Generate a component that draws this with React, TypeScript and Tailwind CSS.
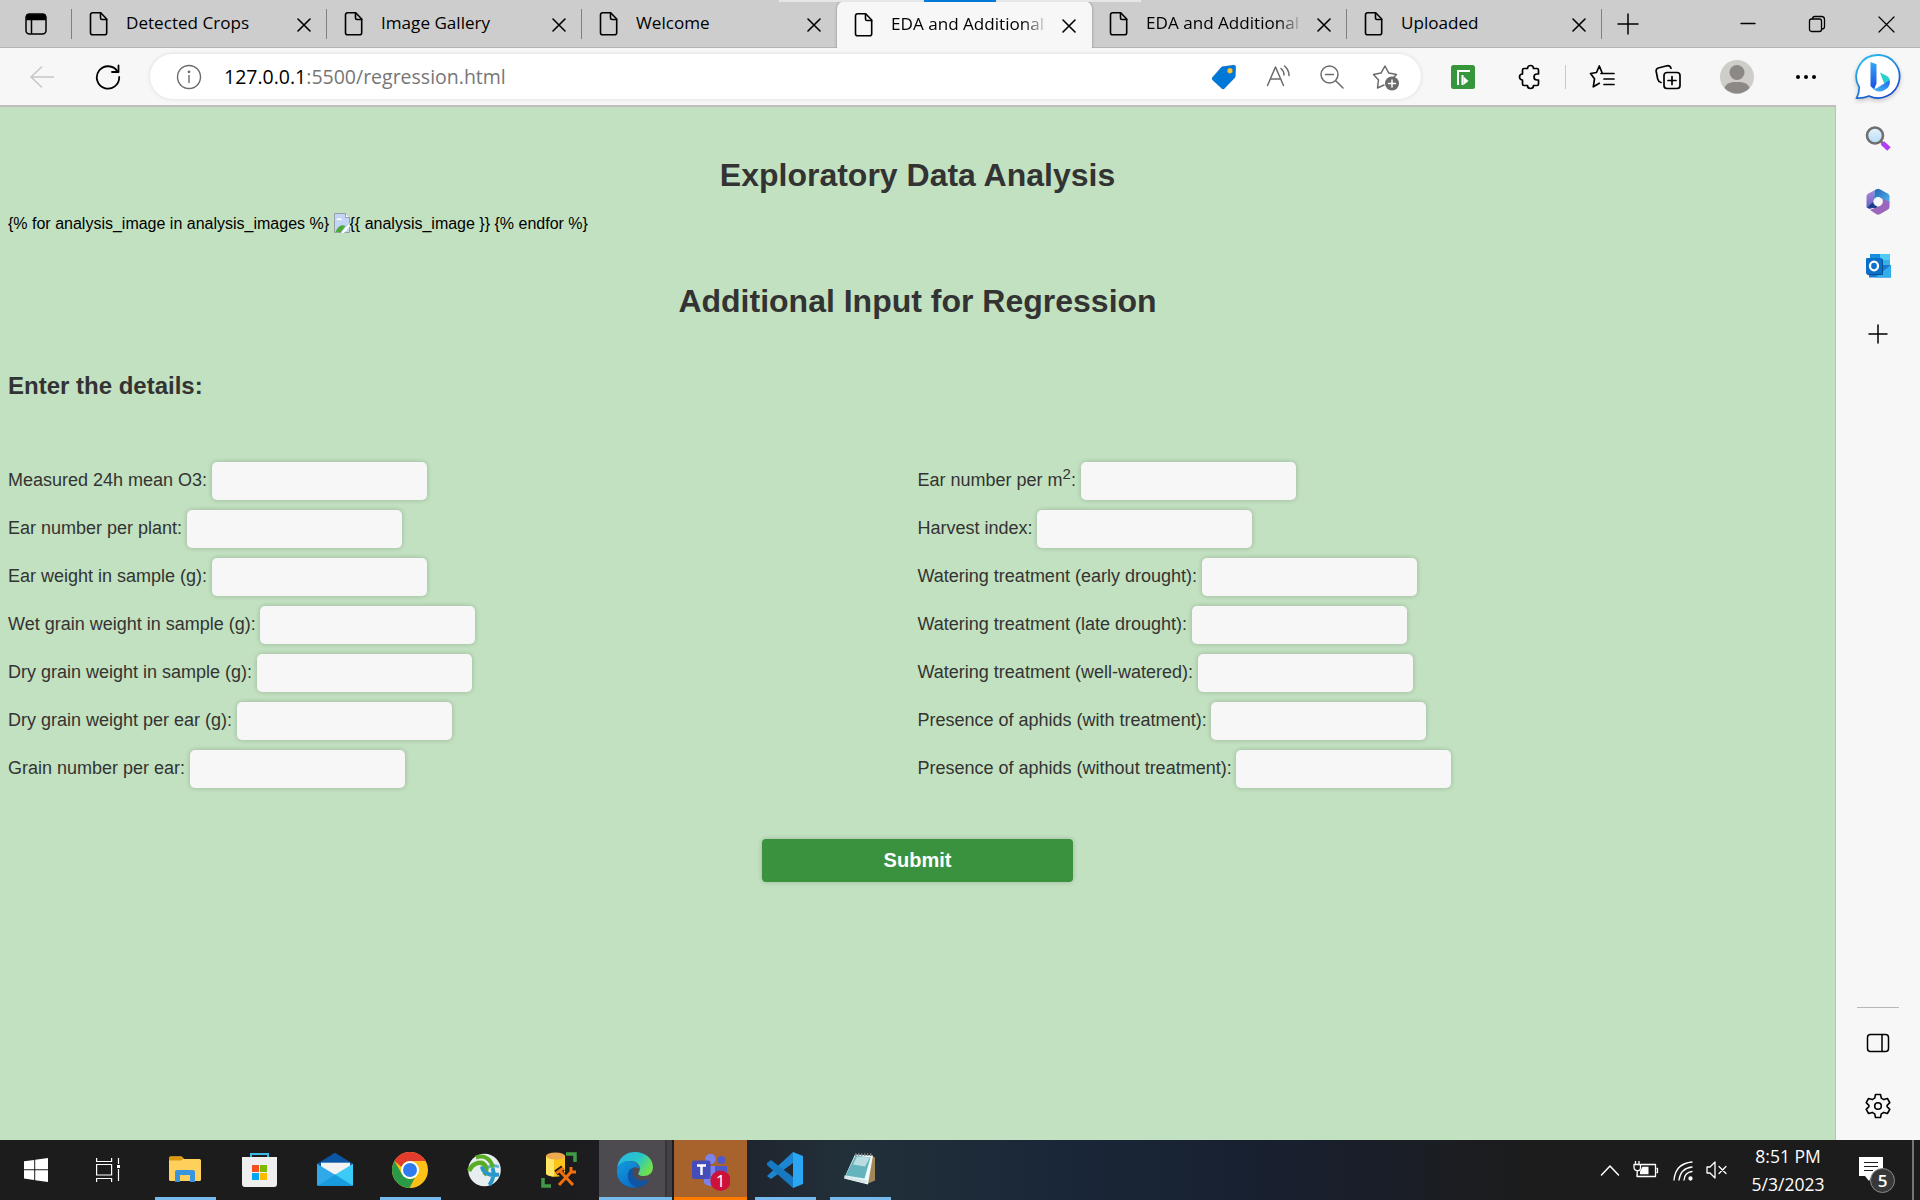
import React from "react";
import type { ReactNode } from "react";

type IconProps = { children: ReactNode; w?: number; h?: number; className?: string; sw?: number };

function Icon({ children, w = 24, h = 24, className = "", sw = 1.5 }: IconProps) {
  return (
    <svg width={w} height={h} viewBox={`0 0 ${w} ${h}`} fill="none" stroke="currentColor" strokeWidth={sw}
      strokeLinecap="round" strokeLinejoin="round" className={`block shrink-0 ${className}`}>
      {children}
    </svg>
  );
}

const PageIcon = () => (
  <Icon w={20} h={26} sw={1.6}>
    <path d="M3.5 1.8h8.2l6 6.2v13.8a2 2 0 0 1-2 2H3.5a2 2 0 0 1-2-2v-18a2 2 0 0 1 2-2z" />
    <path d="M11.5 2v5a1.500 1.500 0 0 0 1.500 1.500h4.600" />
  </Icon>
);

const CloseIcon = ({ s = 14, sw = 1.6 }: { s?: number; sw?: number }) => (
  <Icon w={s} h={s} sw={sw}><path d={`M1 1L${s - 1} ${s - 1}M${s - 1} 1L1 ${s - 1}`} /></Icon>
);

function Tab({ title, active, clipped, divider = true }: { title: string; active?: boolean; clipped?: boolean; divider?: boolean }) {
  return (
    <div className={`flex h-[46px] w-[255px] shrink-0 items-center pl-[17px] ${active ? "z-10 -mb-px h-[47px] rounded-t-lg bg-[#f7f7f7] shadow-[0_0_3px_rgba(0,0,0,0.35)] [clip-path:inset(-4px_-4px_0_-4px)]" : ""}`}>
      <PageIcon />
      <div className={`ml-[17px] mt-[-2px] h-6 w-[157px] whitespace-nowrap text-[17.1px] leading-6 text-black ${clipped ? "[mask-image:linear-gradient(to_right,black_84%,transparent_100%)]" : ""}`}>
        {title}
      </div>
      <div className="ml-[14px] mt-[2px]"><CloseIcon /></div>
      <div className={`ml-auto h-[30px] w-[1.5px] ${divider ? "bg-[#808080]" : ""}`} />
    </div>
  );
}

function TabStrip() {
  return (
    <div className="relative flex h-12 items-end bg-[#cdcdcd] border-b border-[#b4b4b4]">
      <div className="absolute left-[779px] top-0 z-20 flex h-[2px] w-[362px] justify-center bg-[#e6e6e6]">
        <div className="h-full w-[72px] bg-[#0078d7]" />
      </div>
      <div className="flex h-[46px] w-[72px] items-center justify-between pl-[25px]">
        <Icon w={22} h={22}>
          <rect x="1" y="1" width="20" height="20" rx="3.5" />
          <path d="M2 2h18v4.5H2z" fill="currentColor" />
          <path d="M6.5 6v14" />
        </Icon>
        <div className="h-[30px] w-[1.5px] bg-[#808080]" />
      </div>
      <Tab title="Detected Crops" />
      <Tab title="Image Gallery" />
      <Tab title="Welcome" divider={false} />
      <Tab title="EDA and Additional" active clipped divider={false} />
      <Tab title="EDA and Additional" clipped />
      <Tab title="Uploaded" />
      <div className="flex h-[46px] grow items-center pl-[15px]">
        <Icon w={22} h={22}><path d="M11 1v20M1 11h20" /></Icon>
        <Icon w={16} h={16} sw={1.3} className="ml-[101px]"><path d="M1 7.500h14" /></Icon>
        <Icon w={18} h={18} sw={1.3} className="ml-[52px]">
          <rect x="1.5" y="4" width="12" height="12.5" rx="2" />
          <path d="M4.5 3.800c0-1.500 1-2.300 2.300-2.300h6.700a3 3 0 0 1 3 3v7c0 1.500-.8 2.500-2.500 2.500" />
        </Icon>
        <div className="ml-[52px]"><CloseIcon s={17} sw={1.2} /></div>
      </div>
    </div>
  );
}

function BingLogo() {
  return (
    <svg width="48" height="50" viewBox="0 0 48 50" className="block shrink-0 drop-shadow-[0_2px_2px_rgba(0,0,0,0.2)]">
      <defs>
        <linearGradient id="bingRing" x1="0" y1="0" x2=".6" y2="1"><stop offset="0" stopColor="#2cc8f0" /><stop offset="1" stopColor="#1850d0" /></linearGradient>
        <linearGradient id="bingStem" x1="0" y1="0" x2="0" y2="1"><stop offset="0" stopColor="#35a8f8" /><stop offset="1" stopColor="#1a4be0" /></linearGradient>
        <linearGradient id="bingBowl" x1="0" y1="1" x2="1" y2="0"><stop offset="0" stopColor="#46c4f8" /><stop offset="1" stopColor="#2463e8" /></linearGradient>
      </defs>
      <path d="M24.5 2a21.500 21.500 0 1 1-9.500 41c-3.500 1.600-8 2.200-12.300 2.100 1.700-3.500 2.600-6.800 2.500-10.800A21.500 21.500 0 0 1 24.500 2z" fill="#fff" stroke="url(#bingRing)" strokeWidth="1.8" />
      <path d="M16.5 9l6 2.200v19.300l-2.500 6-3.500-3.500z" fill="url(#bingStem)" />
      <path d="M26 19.500l7 3.500c3.500 2 4 7 1 10l-4-3-2.200-5.500z" fill="#2ad0d0" />
      <path d="M16.500 32c1.500 3 4 4.500 6.500 3l12-7.500c2 4-1 8-4.500 9.500-5.500 3-10 2-14-5z" fill="url(#bingBowl)" />
    </svg>
  );
}

function Toolbar() {
  return (
    <div className="flex h-[57px] items-center bg-[#f7f7f7]">
      <Icon w={26} h={26} className="ml-[29px] text-[#c6c6c6]"><path d="M24.500 13H2M12.500 3L2 13l10.500 10" /></Icon>
      <Icon w={26} h={26} sw={1.8} className="ml-[40px] text-black">
        <path d="M22.500 7.500A11.200 11.200 0 1 0 24.200 13" /><path d="M23.500 1.500v6.500h-6.500" />
      </Icon>
      <div className="ml-[29px] flex h-[45px] w-[1271px] items-center rounded-full bg-white pl-[26px] shadow-[0_0_4px_rgba(0,0,0,0.12)]">
        <Icon w={26} h={26} sw={1.4} className="text-[#6b6b6b]">
          <circle cx="13" cy="13" r="11.5" /><path d="M13 11.500v7" /><circle cx="13" cy="7.800" r=".7" fill="currentColor" />
        </Icon>
        <div className="ml-[22px] w-[987px] whitespace-nowrap text-[19.5px] leading-7 text-[#767676]"><span className="text-black">127.0.0.1</span>:5500/regression.html</div>
        <Icon w={26} h={26} sw={0.1}>
          <path d="M12 2.500L22.500 1a2 2 0 0 1 2.300 2.300L24.500 12a3 3 0 0 1-.9 2L13.500 24.500a2 2 0 0 1-2.800 0L1.500 16a2 2 0 0 1 0-2.800L10 3.500a3 3 0 0 1 2-1z" fill="#0078d7" />
          <circle cx="19" cy="6.800" r="2.700" fill="#ffc83d" />
        </Icon>
        <Icon w={26} h={26} className="ml-[29px] text-[#6b6b6b]"><path d="M1.500 21.500L9.500 3l8 18.500M4.500 15h10M15 4.500c2 1.700 3 3.700 3 6.500M18.500 2c3 2.500 4.500 5.500 4.500 9.500" /></Icon>
        <Icon w={26} h={26} className="ml-[27px] text-[#6b6b6b]"><circle cx="10.500" cy="10.500" r="8.500" /><path d="M17 17l7 7M6.500 10.500h8" /></Icon>
        <Icon w={28} h={28} className="ml-[27px] text-[#6b6b6b]">
          <path d="M12 22l-6.500 3 1-8-5-5.500 7.500-1.400L13 3l3.800 7.100 7.700 1.400-3 3" />
          <circle cx="20" cy="20.500" r="7" fill="currentColor" stroke="none" /><path d="M20 17v7M16.500 20.500h7" stroke="#fff" />
        </Icon>
      </div>
      <Icon w={24} h={24} className="ml-[30px]">
        <rect width="24" height="24" rx="2.500" fill="#36963c" stroke="none" />
        <path d="M7 20V6h12M11.500 20V10" stroke="#fff" strokeWidth="2" strokeLinecap="butt" strokeLinejoin="miter" /><path d="M12.500 11.500l5 4.500-5 4z" fill="#fff" stroke="none" />
      </Icon>
      <Icon w={26} h={26} sw={1.7} className="ml-[42px] text-black">
        <path d="M7 4.500h3.500a3 3 0 0 1 6 0H20a1.500 1.500 0 0 1 1.500 1.500v4h-1.500a3 3 0 0 0 0 6h1.500v4a1.500 1.500 0 0 1-1.500 1.500h-3.500a3 3 0 0 1-6 0H7A1.500 1.500 0 0 1 5.500 20v-4a3 3 0 0 1 0-6V6A1.500 1.500 0 0 1 7 4.500z" />
      </Icon>
      <div className="ml-[22px] h-6 w-px bg-[#c8c8c8]" />
      <Icon w={26} h={26} sw={1.7} className="ml-[23px] text-black">
        <path d="M13 8.500L10.300 2 7.500 8.500 1.500 9.500l4 5.300-1.200 8 6-3.500 M12 9.500h13M15 15h10M15 20.500h10" />
      </Icon>
      <Icon w={26} h={26} sw={1.7} className="ml-[40px] text-black">
        <rect x="9" y="8.500" width="16" height="16" rx="3" /><path d="M17 12.500v8M13 16.500h8M6 18.500c-2-.5-2.800-1.500-3.300-3.500L1.200 7.500c-.3-1.800.3-3 2-3.500L12 1.800c2-.4 3.200.3 4 2.500" />
      </Icon>
      <svg width="34" height="34" viewBox="0 0 34 34" className="ml-[39px] block shrink-0">
        <circle cx="17" cy="17" r="17" fill="#cfcdca" /><circle cx="17" cy="12.500" r="7.500" fill="#8b8885" />
        <path d="M4.500 28C6 23.500 10 22 17 22s11 1.500 12.500 6c-7 7.300-18 7.300-25 0z" fill="#8b8885" />
      </svg>
      <Icon w={22} h={6} className="ml-[41px] text-black"><g fill="currentColor" stroke="none"><circle cx="3" cy="3" r="2" /><circle cx="11" cy="3" r="2" /><circle cx="19" cy="3" r="2" /></g></Icon>
      <div className="ml-[37px] mt-[2px]"><BingLogo /></div>
    </div>
  );
}

const BrokenImage = () => (
  <svg width="16" height="20" viewBox="0 0 16 20" className="inline-block align-[-4px]">
    <path d="M.5.500h11L15.500 4.500v15H.5z" fill="#c3d5f4" stroke="#9a9fa5" />
    <path d="M11.500.500v4h4" fill="#fff" stroke="#9a9fa5" /><path d="M2.500 7a1.800 1.800 0 0 1 3-1.500A1.700 1.700 0 0 1 8 7.200z" fill="#fff" />
    <path d="M1.500 19c2-5 6-8 10-6L7 19z" fill="#4fa83a" /><path d="M7 20L16 10v3l-6 7z" fill="#fff" />
  </svg>
);

function Field({ label }: { label: ReactNode }) {
  return (
    <div className="flex h-12 items-center gap-[4.700px]">
      <label className="whitespace-nowrap text-[18px] leading-6 text-[#333]">{label}</label>
      <input aria-label="value" className="mt-[2px] h-[38px] w-[215px] rounded-[5px] bg-[#f7f7f7] shadow-[0_0_5px_rgba(0,0,0,0.2)] outline-none" />
    </div>
  );
}

const leftFields: ReactNode[] = [
  "Measured 24h mean O3:", "Ear number per plant:", "Ear weight in sample (g):", "Wet grain weight in sample (g):",
  "Dry grain weight in sample (g):", "Dry grain weight per ear (g):", "Grain number per ear:",
];
const rightFields: ReactNode[] = [
  <>Ear number per m<sup className="text-[15px] leading-none">2</sup>:</>, "Harvest index:", "Watering treatment (early drought):", "Watering treatment (late drought):",
  "Watering treatment (well-watered):", "Presence of aphids (with treatment):", "Presence of aphids (without treatment):",
];

function Page() {
  return (
    <main className="flex w-[1836px] shrink-0 flex-col border-r border-t-2 border-[#bdbdbd] bg-[#c2e1c0] px-2 font-['Liberation_Sans',Arial,sans-serif] text-[#333]">
      <h1 className="mt-[48px] text-center text-[32px] font-bold leading-[40px]">Exploratory Data Analysis</h1>
      <p className="mt-[18px] h-[22px] text-[16px] leading-[22px] text-black">
        {"{% for analysis_image in analysis_images %} "}<BrokenImage />{"{{ analysis_image }} {% endfor %}"}
      </p>
      <h1 className="mt-[46px] text-center text-[32px] font-bold leading-[40px]">Additional Input for Regression</h1>
      <h2 className="mt-[50px] text-[24px] font-bold leading-[30px]">Enter the details:</h2>
      <form className="mt-[55px]">
        <div className="grid grid-cols-[909.500px_909px]">
          <div>{leftFields.map((f, i) => <Field key={i} label={f} />)}</div>
          <div>{rightFields.map((f, i) => <Field key={i} label={f} />)}</div>
        </div>
        <button type="button" className="mx-auto mt-[47px] block h-[43px] w-[311px] rounded-[4px] bg-[#3a923f] pb-[2px] text-[20px] font-bold text-white shadow-[0_0_5px_rgba(0,0,0,0.2)]">Submit</button>
      </form>
    </main>
  );
}

function Sidebar() {
  return (
    <aside className="flex grow flex-col items-center bg-[#f7f7f7] text-black">
      <svg width="26" height="26" viewBox="0 0 26 26" className="mt-[21px] block">
        <defs><linearGradient id="lens" x1="0" y1="0" x2="0" y2="1"><stop offset="0" stopColor="#e8f4fc" /><stop offset="1" stopColor="#b5daf5" /></linearGradient></defs>
        <path d="M16 15.500l3 3" stroke="#777" strokeWidth="3" /><path d="M17.500 17l6.500 6" stroke="#b43cf5" strokeWidth="5" /><circle cx="10" cy="9.500" r="8" fill="url(#lens)" stroke="#6f6f6f" strokeWidth="2.600" />
      </svg>
      <svg width="26" height="28" viewBox="0 0 26 28" className="mt-[36px] block">
        <defs>
          <linearGradient id="m1" x1="0" y1="0" x2="0" y2="1"><stop offset="0" stopColor="#b186dc" /><stop offset="1" stopColor="#5a62c4" /></linearGradient>
          <linearGradient id="m2" x1="0" y1="0" x2="1" y2="1"><stop offset="0" stopColor="#2460b4" /><stop offset="1" stopColor="#52b9f0" /></linearGradient>
        </defs>
        <path d="M9 2.500L3 5.800A3 3 0 0 0 1.500 8.500v10.800l3 2 8-3.300-3-3.500z" fill="url(#m1)" />
        <path d="M9.500 2.300l2-1a3.500 3.500 0 0 1 3.300 0l8.200 4.500A3 3 0 0 1 24.500 8.500V15l-7-4-4-1.500-4.500 3z" fill="url(#m2)" />
        <path d="M24.500 14v5a3 3 0 0 1-1.500 2.600l-8.200 4.700a3.500 3.500 0 0 1-3.300 0L5 22l8-3.500 4.500-3.500v-4.500z" fill="#9a65ba" />
        <path d="M2 19.800l9 .3 2-2-3-2-2-2z" fill="#183c86" />
        <circle cx="13" cy="13.800" r="4.700" fill="#f7f7f7" />
      </svg>
      <svg width="26" height="26" viewBox="0 0 26 26" className="mt-[37px] block">
        <path d="M5 1h20v15H5z" fill="#50c9f5" /><path d="M5 1h10v6H5z" fill="#1490df" /><path d="M15 7h10v7l-10 1z" fill="#35b2eb" />
        <path d="M4 12l22 0v12.500H4z" fill="#1b78cf" /><path d="M26 12L10 24.500h16z" fill="#31aeea" />
        <rect x="2" y="6" width="16" height="16" rx="1" fill="#0b4f93" /><rect x="1" y="5" width="16" height="16" rx="1" fill="#0c70cb" />
        <ellipse cx="9" cy="13" rx="4" ry="4.300" fill="none" stroke="#fff" strokeWidth="2.300" />
      </svg>
      <Icon w={20} h={20} className="mt-[45px]"><path d="M10 1v18M1 10h18" /></Icon>
      <div className="mt-auto h-px w-[42px] bg-[#b8b8b8]" />
      <Icon w={24} h={20} className="mt-[25px]"><rect x="1.500" y="1.500" width="21" height="17" rx="3" /><path d="M16 2v16" /></Icon>
      <Icon w={26} h={26} sw={1.6} className="mb-[21px] mt-[40px]">
        <path d="M10.500 1.500h5l.8 3.600 2.500 1.500 3.600-1.100 2.400 4.200-2.700 2.600v1.400l2.700 2.600-2.400 4.200-3.600-1.100-2.500 1.500-.8 3.600h-5l-.8-3.600-2.500-1.500-3.600 1.100-2.400-4.200 2.700-2.600v-1.400L1.200 9.700l2.400-4.200 3.600 1.100 2.500-1.500z" /><circle cx="13" cy="13" r="3.300" />
      </Icon>
    </aside>
  );
}

function TaskbarApp({ children, state = "" }: { children: ReactNode; state?: "" | "open" | "active" | "alert" }) {
  const bg = { "": "w-[75px]", open: "w-[75px]", active: "w-[73px] mx-px bg-[#4d4a50]", alert: "w-[73px] mx-px bg-[#a8622c]" }[state];
  const bar = { "": "", open: "w-[61px] bg-[#76b9ed]", active: "w-[73px] bg-[#76b9ed]", alert: "w-[73px] bg-[#ff7b00]" }[state];
  return (
    <div className={`relative flex h-[60px] shrink-0 flex-col items-center ${bg}`}>
      {state === "active" && <div className="absolute right-0 top-0 h-[57px] w-[7px] border-l-2 border-[#37353a] bg-[#434046]" />}
      <div className="flex h-[57px] w-full items-center justify-center pr-[1px] pt-[7px]">
        <svg width="40" height="40" viewBox="0 0 40 40" className="block">{children}</svg>
      </div>
      <div className={`h-[3px] ${bar}`} />
    </div>
  );
}

function Taskbar() {
  return (
    <footer className="flex h-[60px] items-center bg-[linear-gradient(90deg,#1c1c1c_0%,#1c1c1d_28%,#1e1e26_36%,#22303a_44%,#1a2738_55%,#182030_66%,#1c1c1c_80%)] text-white">
      <svg width="24" height="24" viewBox="0 0 24 24" className="ml-6 block shrink-0" fill="#fff"><path d="M0 3.300L10.200 2v9.300H0zM11.200 1.800L24 0v11.300H11.200zM0 12.300h10.200V22L0 20.600zM11.200 12.300H24V24l-12.800-1.800z" /></svg>
      <svg width="25" height="24" viewBox="0 0 25 24" className="ml-12 block shrink-0" fill="none" stroke="#fff" strokeWidth="1.200"><path d="M.6 0v3.500h15V0M.6 24v-3.500h15V24M.6 6.500h15v10.500H.6zM22.500 0v6M22.500 11v12" /><path d="M21 7h3v3h-3z" fill="#fff" stroke="none" /></svg>
      <div className="ml-[27px] flex">
        <TaskbarApp state="open">
          <path d="M4 6a1.500 1.500 0 0 1 1.500-1.500h11L19 7h15.500A1.500 1.500 0 0 1 36 8.500v19a1.500 1.500 0 0 1-1.500 1.500h-29A1.500 1.500 0 0 1 4 27.500z" fill="#ffd15c" />
          <path d="M4 6a1.500 1.500 0 0 1 1.500-1.500h11L18.500 6l-2 2.500H4z" fill="#dd9a0c" />
          <path d="M10 30V20a2 2 0 0 1 2-2h16a2 2 0 0 1 2 2v10h-5v-7H15v7z" fill="#3a93dd" />
        </TaskbarApp>
        <TaskbarApp>
          <g transform="translate(-1)"><path d="M12 7V2h17v5" fill="none" stroke="#3cb8ea" strokeWidth="2" />
          <path d="M3 5h35v27a3 3 0 0 1-3 3H6a3 3 0 0 1-3-3z" fill="#efefef" /><path d="M13 13h7v7h-7z" fill="#f25022" /><path d="M21 13h7v7h-7z" fill="#7fba00" /><path d="M13 21h7v7h-7z" fill="#00a4ef" /><path d="M21 21h7v7h-7z" fill="#ffb900" /></g>
        </TaskbarApp>
        <TaskbarApp>
          <g transform="translate(0 .700)"><path d="M2 11L20 0l18 11v10H2z" fill="#0b57a4" /><path d="M6 10h29v12H6z" fill="#f3f3f3" /><path d="M2 11l36 22H3a1 1 0 0 1-1-1z" fill="#2fa9e8" /><path d="M38 11v21a1 1 0 0 1-1 1L20 22z" fill="#3ccaf7" /><path d="M3 33h35L20 22z" fill="#199bdf" /></g>
        </TaskbarApp>
        <TaskbarApp state="open">
          <circle cx="20" cy="18" r="18" fill="#fbc116" />
          <path d="M4.400 9A18 18 0 0 1 35.600 9H20a9 9 0 0 0-8.500 6z" fill="#e33b2e" />
          <path d="M4.400 9l7.800 13.500A9 9 0 0 0 25 25.500l-5.500 10.400A18 18 0 0 1 4.400 9z" fill="#2a9a48" />
          <circle cx="20" cy="18" r="9" fill="#fff" /><circle cx="20" cy="18" r="7" fill="#2d7bef" />
        </TaskbarApp>
        <TaskbarApp>
          <circle cx="19.500" cy="18" r="16.300" fill="#e8eef0" />
          <path d="M34 15c-4-2-8-2-12 1-3 2-5 0-5-2" fill="none" stroke="#5db7dc" strokeWidth="3" />
          <path d="M4 19C8 10 18 8 21 15c1 4 0 6-2 8" fill="none" stroke="#5aab25" strokeWidth="4.500" />
          <path d="M11 5.500c9-3 15 2 17 10" fill="none" stroke="#5aab25" strokeWidth="4" />
          <path d="M17 15c1 6 8 9 17 7.500M27.500 16c2.500 6 1 11-3 17" fill="none" stroke="#2997c9" strokeWidth="4" />
        </TaskbarApp>
        <TaskbarApp>
          <path d="M26 2h9v8M3 26v8h8" fill="none" stroke="#3f9b46" strokeWidth="3.500" />
          <path d="M6 3.500h19V22c-4 3.500-15 3.500-19 0z" fill="#fdc51c" /><path d="M6 5h8v19.500c-4 0-8-2-8-3z" fill="#ffe566" /><ellipse cx="15.500" cy="4" rx="9.500" ry="3.500" fill="#eda94d" />
          <path d="M19 19l14 15M20 34l13-15M16 21l7-5M30 15l0 5h5" fill="none" stroke="#1c1c1c" strokeWidth="6" /><path d="M20 19l13 14M19 33l13-14M16.500 21l7-5M31 15v5h5" fill="none" stroke="#f2700d" strokeWidth="3" />
        </TaskbarApp>
        <TaskbarApp state="active">
          <defs>
            <linearGradient id="edgeA" x1="0" y1="0" x2="1" y2=".5"><stop offset="0" stopColor="#28b4e6" /><stop offset=".6" stopColor="#28c6c8" /><stop offset="1" stopColor="#6ee04f" /></linearGradient>
            <linearGradient id="edgeB" x1="0" y1="0" x2=".6" y2="1"><stop offset="0" stopColor="#149cdd" /><stop offset="1" stopColor="#0870c8" /></linearGradient>
          </defs>
          <path d="M2 16C3.500 6 10.500 0 20 0c10 0 18 6.500 18 15 0 6-4 9-9.500 9-4 0-6-1.500-5-3 4-6-1-12-8-12C9 9 4 12 2 16z" fill="url(#edgeA)" />
          <path d="M2 18C3 12 8 9 14 9c6 0 10 3.500 10.500 8-3-3-8-2-10 2-2.500 5.500 1 12.500 7 16.500C9.500 37 1 28 2 18z" fill="url(#edgeB)" />
          <path d="M15 17c-5 7-1 16 7 18.500 5-.5 10-3.500 13-8.500-7 3.500-14 1.500-17-4-.8-2-.3-4 1-6z" fill="#1055a3" />
        </TaskbarApp>
        <TaskbarApp state="alert">
          <circle cx="20.500" cy="7" r="5.300" fill="#7b83eb" /><circle cx="31.500" cy="8" r="4" fill="#5059c9" /><path d="M14 14h14v14a8 8 0 0 1-14 3z" fill="#7b83eb" /><path d="M25 14h12v9a7 7 0 0 1-12 5z" fill="#5059c9" />
          <rect x="2" y="8.500" width="18.500" height="18.500" rx="2" fill="#454eb8" /><path d="M7 13.500h9M11.500 13.500V23" stroke="#fff" strokeWidth="2.400" />
          <circle cx="30.500" cy="28.800" r="10.200" fill="#cc1238" /><text x="30.500" y="35" textAnchor="middle" fontSize="17" fill="#fff">1</text>
        </TaskbarApp>
        <TaskbarApp state="open">
          <path d="M2 24L28 0V11L6 27z" fill="#1d86d0" /><path d="M2 11l4-3L28 25v11L2 13z" fill="#1679c2" /><path d="M28 0l10 4v28l-10 4z" fill="#2ba6f2" />
        </TaskbarApp>
        <TaskbarApp state="open">
          <g transform="translate(1 -.500)"><path d="M30 4l4 2v23l-7 3z" fill="#a08755" /><path d="M14 3l18 1-5 29-24-6z" fill="#eef8f9" /><path d="M14.500 4l15 2-6 21-19-3z" fill="#65b3bd" /><path d="M16 5l13 1-5 9-12-2z" fill="#b9dde1" /><path d="M3 24l23 5-1 3-21-5z" fill="#d5e7e8" /><path d="M14 3h18" stroke="#777" strokeWidth="2.500" strokeDasharray="1.500 1.500" /></g>
        </TaskbarApp>
      </div>
      <Icon w={20} h={14} className="ml-[702px]"><path d="M1.500 12L10 3l8.500 9" /></Icon>
      <Icon w={26} h={20} sw={1.4} className="ml-[13px]">
        <path d="M8 4.500h14.500v12H4V14M23.500 8.500h1v4h-1M2.500 1v3M6 1v3M1 4.500h6.500v3a3.200 3.200 0 0 1-6.500 0zM4.200 11v5" strokeWidth="1.300" strokeLinecap="butt" /><path d="M9.500 6.800h6v7.500H7v-3z" fill="#fff" stroke="none" />
      </Icon>
      <Icon w={22} h={22} sw={1.3} className="ml-[14px] mt-[2px]"><path d="M1 20C2 9 8 3 19 2M6 20C7 12 11 8 19 7M11 20c.5-5 3.500-8 8-8.500" /><circle cx="17.500" cy="18.500" r="1.500" fill="#fff" /></Icon>
      <Icon w={24} h={20} sw={1.3} className="ml-[10px]"><path d="M2 7h3l5-5v16l-5-5H2zM14 6.500l7 7M21 6.500l-7 7" /></Icon>
      <div className="ml-[20px] w-[78px] text-center text-[17.5px] leading-[28px]"><div>8:51 PM</div><div>5/3/2023</div></div>
      <svg width="40" height="40" viewBox="0 0 40 40" className="ml-[30px] mt-[12px] block shrink-0">
        <path d="M2 1h24v19H15l-3 5-4-5H2z" fill="#fff" /><path d="M7 6.500h14M7 10.500h14M7 14.500h9" stroke="#1c1c1c" strokeWidth="1.200" />
        <circle cx="25.500" cy="24.500" r="12" fill="#383838" stroke="#8a8a8a" /><text x="25.500" y="31" textAnchor="middle" fontSize="17" fontWeight="600" fill="#fff">5</text>
      </svg>
      <div className="ml-auto mr-[6px] h-[60px] w-[2px] bg-[#747474]" />
    </footer>
  );
}

export default function App() {
  return (
    <div className="flex h-[1200px] w-[1920px] flex-col overflow-hidden bg-[#f7f7f7] font-['Open_Sans','Noto_Sans',sans-serif]">
      <TabStrip />
      <Toolbar />
      <div className="flex h-[1035px]">
        <Page />
        <Sidebar />
      </div>
      <Taskbar />
    </div>
  );
}
